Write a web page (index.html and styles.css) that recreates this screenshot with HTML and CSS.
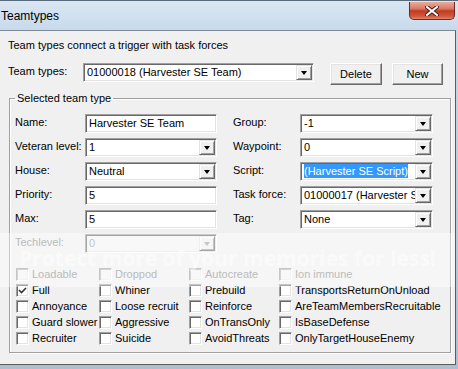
FILE: index.html
```html
<!DOCTYPE html>
<html lang="en">
<head>
  <meta charset="UTF-8">
  <title>Teamtypes</title>
  <link rel="stylesheet" href="styles.css">
</head>
<body>
  <div class="window">
    <div class="titlebar">
      <span class="title">Teamtypes</span>
      <button class="close">
        <svg width="14" height="10" viewBox="0 0 14 10">
          <path d="M2 1 L12 9 M12 1 L2 9" stroke="#4a1a12" stroke-width="4" stroke-linecap="square"/>
          <path d="M2 1 L12 9 M12 1 L2 9" stroke="#fff" stroke-width="2" stroke-linecap="square"/>
        </svg>
      </button>
    </div>

    <div class="client">
      <p class="intro">Team types connect a trigger with task forces</p>

      <div class="teamrow">
        <label class="lbl">Team types:</label>
        <div class="combo wide"><span class="value">01000018 (Harvester SE Team)</span><span class="arrow"></span></div>
        <button class="btn delete">Delete</button>
        <button class="btn new">New</button>
      </div>

      <fieldset class="group">
        <legend>Selected team type</legend>
        <div class="fields">
          <label class="lbl">Name:</label>
          <div class="edit"><span class="value">Harvester SE Team</span></div>
          <label class="lbl r">Group:</label>
          <div class="combo"><span class="value">-1</span><span class="arrow"></span></div>

          <label class="lbl">Veteran level:</label>
          <div class="combo"><span class="value">1</span><span class="arrow"></span></div>
          <label class="lbl r">Waypoint:</label>
          <div class="combo"><span class="value">0</span><span class="arrow"></span></div>

          <label class="lbl">House:</label>
          <div class="combo"><span class="value">Neutral</span><span class="arrow"></span></div>
          <label class="lbl r">Script:</label>
          <div class="combo"><span class="value"><span class="sel">(Harvester SE Script)</span></span><span class="arrow"></span></div>

          <label class="lbl">Priority:</label>
          <div class="edit"><span class="value">5</span></div>
          <label class="lbl r">Task force:</label>
          <div class="combo"><span class="value">01000017 (Harvester SE Task Force)</span><span class="arrow"></span></div>

          <label class="lbl">Max:</label>
          <div class="edit"><span class="value">5</span></div>
          <label class="lbl r">Tag:</label>
          <div class="combo"><span class="value">None</span><span class="arrow"></span></div>

          <label class="lbl off">Techlevel:</label>
          <div class="combo off"><span class="value">0</span><span class="arrow"></span></div>
        </div>

        <div class="checks">
          <div class="check off"><span class="box"></span>Loadable</div>
          <div class="check off"><span class="box"></span>Droppod</div>
          <div class="check off"><span class="box"></span>Autocreate</div>
          <div class="check off"><span class="box"></span>Ion immune</div>

          <div class="check"><span class="box"><svg width="9" height="9" viewBox="0 0 9 9"><path d="M1 4 L3.5 6.5 L8 2" fill="none" stroke="#333" stroke-width="1.6"/></svg></span>Full</div>
          <div class="check"><span class="box"></span>Whiner</div>
          <div class="check"><span class="box"></span>Prebuild</div>
          <div class="check"><span class="box"></span>TransportsReturnOnUnload</div>

          <div class="check"><span class="box"></span>Annoyance</div>
          <div class="check"><span class="box"></span>Loose recruit</div>
          <div class="check"><span class="box"></span>Reinforce</div>
          <div class="check"><span class="box"></span>AreTeamMembersRecruitable</div>

          <div class="check"><span class="box"></span>Guard slower</div>
          <div class="check"><span class="box"></span>Aggressive</div>
          <div class="check"><span class="box"></span>OnTransOnly</div>
          <div class="check"><span class="box"></span>IsBaseDefense</div>

          <div class="check"><span class="box"></span>Recruiter</div>
          <div class="check"><span class="box"></span>Suicide</div>
          <div class="check"><span class="box"></span>AvoidThreats</div>
          <div class="check"><span class="box"></span>OnlyTargetHouseEnemy</div>
        </div>
      </fieldset>

      <div class="watermark">Protect more of your memories for less!</div>
    </div>
  </div>
</body>
</html>
```

FILE: styles.css
```css
body {
  margin: 0;
  font-family: "Liberation Sans", Arial, sans-serif;
  font-size: 11px;
  color: #000;
  background: #c3d3e4;
}
.window {
  width: 458px;
  height: 369px;
  display: flex;
  flex-direction: column;
  background: linear-gradient(#cbdaea, #aebfd2);
  overflow: hidden;
}
.titlebar {
  height: 30px;
  box-sizing: border-box;
  display: flex;
  justify-content: space-between;
  align-items: flex-start;
  border-top: 1px solid #596a7c;
  background: linear-gradient(180deg, #d9e5f2 0%, #d0e0f0 55%, #c8d9ec 100%);
}
.title {
  font-size: 12px;
  line-height: 14px;
  padding: 8px 0 0 1px;
}
.close {
  width: 46px;
  height: 18px;
  margin: 1px 3px 0 0;
  padding: 0;
  border: 1px solid #6e2a20;
  border-top: none;
  border-radius: 0 0 5px 5px;
  background: linear-gradient(180deg, #e8ab9c 0%, #d87a64 40%, #c43a1f 52%, #cf5a3e 85%, #de8a70 100%);
  display: flex;
  align-items: center;
  justify-content: center;
}
.client {
  flex: 1;
  position: relative;
  background: #f0f0f0;
  border-top: 1px solid #7d8a98;
  border-right: 1px solid #5c5c5c;
  border-bottom: 1px solid #5c5c5c;
  margin: 0 2px 4px 0;
  padding: 8px 0 0 8px;
}
.intro {
  margin: 0;
  line-height: 13px;
}
.teamrow {
  display: flex;
  align-items: flex-start;
  margin-top: 11px;
}
.teamrow .lbl {
  width: 75px;
}
.lbl {
  line-height: 13px;
  padding-top: 2px;
  white-space: nowrap;
}
.lbl.r {
  padding-left: 16px;
}
.lbl.off {
  color: #8d8d8d;
}
.combo, .edit {
  height: 19px;
  box-sizing: border-box;
  display: flex;
  align-items: stretch;
  background: #fff;
  border: 1px solid;
  border-color: #a0a0a0 #fff #fff #a0a0a0;
  box-shadow: inset 1px 1px 0 #696969, inset -1px -1px 0 #e3e3e3;
  overflow: hidden;
}
.combo.wide {
  width: 231px;
}
.combo.off {
  background: #f4f4f4;
  color: #9a9a9a;
}
.value {
  flex: 1;
  min-width: 0;
  padding-left: 3px;
  line-height: 17px;
  white-space: nowrap;
  overflow: hidden;
}
.sel {
  background: #3399ff;
  color: #fff;
  padding: 1px 0;
}
.arrow {
  width: 16px;
  margin: 1px 1px 1px 0;
  box-sizing: border-box;
  display: flex;
  align-items: center;
  justify-content: center;
  background: #f0f0f0;
  border: 1px solid;
  border-color: #e3e3e3 #696969 #696969 #e3e3e3;
  box-shadow: inset 1px 1px 0 #fff, inset -1px -1px 0 #a0a0a0;
}
.arrow::before {
  content: "";
  border-left: 3.5px solid transparent;
  border-right: 3.5px solid transparent;
  border-top: 4px solid #000;
  margin-top: 1px;
}
.combo.off .arrow::before {
  border-top-color: #a0a0a0;
}
.btn {
  height: 22px;
  padding: 0;
  font: inherit;
  color: #000;
  background: #f0f0f0;
  border: 1px solid;
  border-color: #fff #696969 #696969 #fff;
  box-shadow: inset -1px -1px 0 #a0a0a0, inset 1px 1px 0 #e3e3e3;
}
.delete {
  width: 52px;
  margin-left: 16px;
}
.new {
  width: 51px;
  margin-left: 10px;
}
.group {
  width: 434px;
  box-sizing: border-box;
  margin: 7px 0 0 1px;
  padding: 9px 9px 6px 5px;
  border: 1px solid #a0a0a0;
  box-shadow: 1px 1px 0 #fff, inset 1px 1px 0 #fff;
}
.group legend {
  padding: 0 2px;
  line-height: 13px;
}
.fields {
  display: grid;
  grid-template-columns: 70px 132px 83px 133px;
  grid-auto-rows: 19px;
  row-gap: 5px;
}
.checks {
  display: grid;
  grid-template-columns: 83px 90px 90px auto;
  grid-auto-rows: 16px;
  margin: 13px 0 0 1px;
}
.check {
  display: flex;
  align-items: center;
  gap: 3px;
  white-space: nowrap;
}
.check.off {
  color: #8d8d8d;
}
.box {
  width: 13px;
  height: 13px;
  box-sizing: border-box;
  display: flex;
  align-items: center;
  justify-content: center;
  background: #fff;
  border: 1px solid;
  border-color: #a0a0a0 #fff #fff #a0a0a0;
  box-shadow: inset 1px 1px 0 #696969, inset -1px -1px 0 #e3e3e3;
}
.check.off .box {
  background: #f4f4f4;
  box-shadow: inset 1px 1px 0 #b4b4b4, inset -1px -1px 0 #ececec;
}
.watermark {
  position: absolute;
  left: 0;
  right: 0;
  top: 202px;
  height: 54px;
  box-sizing: border-box;
  padding-top: 17px;
  background: rgba(255, 255, 255, 0.4);
  color: rgba(255, 255, 255, 0.5);
  font-family: "Open Sans", sans-serif;
  font-weight: bold;
  font-size: 21px;
  line-height: 16px;
  text-align: center;
  white-space: nowrap;
  pointer-events: none;
}
```
